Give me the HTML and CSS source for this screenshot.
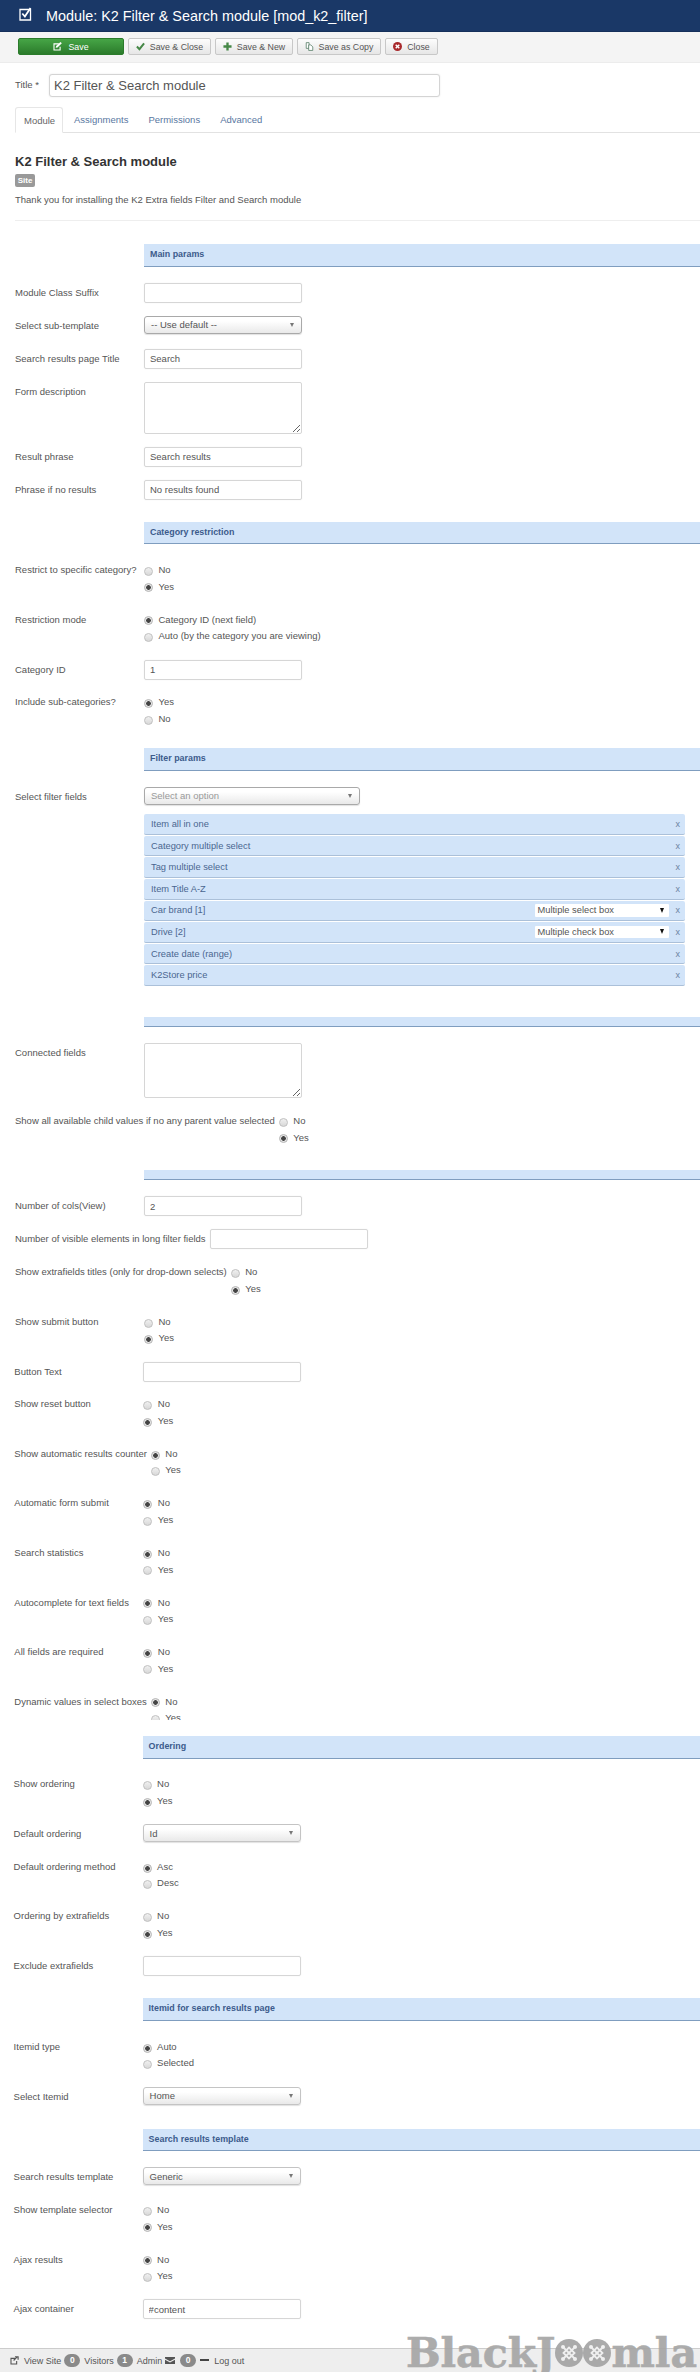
FILE: index.html
```html
<!DOCTYPE html>
<html lang="en">
<head>
<meta charset="utf-8">
<title>Module: K2 Filter &amp; Search module</title>
<link rel="stylesheet" href="styles.css">
</head>
<body>
<header class="topbar">
  <svg class="top-icon" viewBox="0 0 14 14"><path d="M1 2.500h10.500v10.500h-10.500z" fill="none" stroke="#fff" stroke-width="1.300"/><path d="M3.300 6.500l2.600 3 5.600-8.500" fill="none" stroke="#fff" stroke-width="1.800"/></svg>
  <h1 class="top-title">Module: K2 Filter &amp; Search module [mod_k2_filter]</h1>
</header>
<nav class="toolbar">
  <button class="btn btn-save"><svg class="ic" viewBox="0 0 10 10"><path d="M0.500 1.500h6v1.200h-4.800v5.600h5.600v-3h1.200v4.200h-8z" fill="#fff"/><path d="M3.500 4.500l4.800-4.500 1.500 1.500-4.800 4.600-2 .4z" fill="#fff"/></svg>Save</button>
  <button class="btn btn-sc"><svg class="ic ic-wide" viewBox="0 0 10 9"><path d="M1 4.500l2.800 3 5.200-6.500" fill="none" stroke="#468847" stroke-width="2.200"/></svg>Save &amp; Close</button>
  <button class="btn btn-sn"><svg class="ic ic-wide" viewBox="0 0 10 10"><path d="M5 0.500v9M0.500 5h9" stroke="#468847" stroke-width="2.600"/></svg>Save &amp; New</button>
  <button class="btn btn-cp"><svg class="ic ic-wide" viewBox="0 0 10 11"><path d="M1 .8h3.500v7h-3.500z" fill="#fff" stroke="#5a7f6a"/><path d="M4 3.500h2.500l2.500 2.500v4.300h-5z" fill="#fff" stroke="#5a7f6a"/></svg>Save as Copy</button>
  <button class="btn btn-cl"><svg class="ic ic-wide" viewBox="0 0 10 10"><circle cx="5" cy="5" r="5" fill="#a8282b"/><path d="M3 3l4 4M7 3l-4 4" stroke="#fff" stroke-width="1.600"/></svg>Close</button>
</nav>
<main>
  <div class="title-row">
    <label class="title-lbl">Title *</label>
    <input class="title-inp" type="text" value="K2 Filter &amp; Search module">
  </div>
  <ul class="tabs">
    <li class="tab tab-on">Module</li>
    <li class="tab">Assignments</li>
    <li class="tab">Permissions</li>
    <li class="tab">Advanced</li>
  </ul>
  <section class="intro">
    <h2 class="intro-h">K2 Filter &amp; Search module</h2>
    <span class="site-badge">Site</span>
    <p class="intro-p">Thank you for installing the K2 Extra fields Filter and Search module</p>
    <hr class="rule">
  </section>
  <form class="form">
    <div class="band band-first">Main params</div>
    <div class="row field"><label class="lbl">Module Class Suffix</label><input class="inp" type="text"></div>
    <div class="row field"><label class="lbl">Select sub-template</label><div class="chz chz-dark"><span>-- Use default --</span><i class="caret"></i></div></div>
    <div class="row field"><label class="lbl">Search results page Title</label><input class="inp" type="text" value="Search"></div>
    <div class="row field"><label class="lbl">Form description</label><textarea class="area"></textarea></div>
    <div class="row field"><label class="lbl">Result phrase</label><input class="inp" type="text" value="Search results"></div>
    <div class="row field"><label class="lbl">Phrase if no results</label><input class="inp" type="text" value="No results found"></div>

    <div class="band">Category restriction</div>
    <div class="row radio-row"><label class="lbl">Restrict to specific category?</label><div class="radios"><div class="opt"><input class="rad" type="radio" name="r1">No</div><div class="opt"><input class="rad" type="radio" name="r1" checked>Yes</div></div></div>
    <div class="row radio-row"><label class="lbl">Restriction mode</label><div class="radios"><div class="opt"><input class="rad" type="radio" name="r2" checked>Category ID (next field)</div><div class="opt"><input class="rad" type="radio" name="r2">Auto (by the category you are viewing)</div></div></div>
    <div class="row field"><label class="lbl">Category ID</label><input class="inp" type="text" value="1"></div>
    <div class="row radio-row"><label class="lbl">Include sub-categories?</label><div class="radios"><div class="opt"><input class="rad" type="radio" name="r3" checked>Yes</div><div class="opt"><input class="rad" type="radio" name="r3">No</div></div></div>

    <div class="band">Filter params</div>
    <div class="row filter-row"><label class="lbl">Select filter fields</label>
      <div class="filter-col">
        <div class="chz chz-wide chz-dark"><span class="ph">Select an option</span><i class="caret"></i></div>
        <ul class="items">
          <li class="item"><span class="item-name">Item all in one</span><span class="item-x">x</span></li>
          <li class="item"><span class="item-name">Category multiple select</span><span class="item-x">x</span></li>
          <li class="item"><span class="item-name">Tag multiple select</span><span class="item-x">x</span></li>
          <li class="item"><span class="item-name">Item Title A-Z</span><span class="item-x">x</span></li>
          <li class="item"><span class="item-name">Car brand [1]</span><div class="mini"><span>Multiple select box</span><b class="mini-caret"></b></div><span class="item-x">x</span></li>
          <li class="item"><span class="item-name">Drive [2]</span><div class="mini"><span>Multiple check box</span><b class="mini-caret"></b></div><span class="item-x">x</span></li>
          <li class="item"><span class="item-name">Create date (range)</span><span class="item-x">x</span></li>
          <li class="item"><span class="item-name">K2Store price</span><span class="item-x">x</span></li>
        </ul>
      </div>
    </div>

    <div class="band empty gap-wide"></div>
    <div class="row field"><label class="lbl">Connected fields</label><textarea class="area area-lg"></textarea></div>
    <div class="row radio-row"><label class="lbl">Show all available child values if no any parent value selected</label><div class="radios"><div class="opt"><input class="rad" type="radio" name="r4">No</div><div class="opt"><input class="rad" type="radio" name="r4" checked>Yes</div></div></div>

    <div class="band empty gap-mid"></div>
    <div class="row field"><label class="lbl">Number of cols(View)</label><input class="inp" type="text" value="2"></div>
    <div class="row field"><label class="lbl">Number of visible elements in long filter fields</label><input class="inp" type="text"></div>
    <div class="row radio-row"><label class="lbl">Show extrafields titles (only for drop-down selects)</label><div class="radios"><div class="opt"><input class="rad" type="radio" name="r5">No</div><div class="opt"><input class="rad" type="radio" name="r5" checked>Yes</div></div></div>
    <div class="row radio-row"><label class="lbl">Show submit button</label><div class="radios"><div class="opt"><input class="rad" type="radio" name="r6">No</div><div class="opt"><input class="rad" type="radio" name="r6" checked>Yes</div></div></div>

    <div class="part part-b">
      <div class="row field"><label class="lbl">Button Text</label><input class="inp" type="text"></div>
      <div class="row radio-row"><label class="lbl">Show reset button</label><div class="radios"><div class="opt"><input class="rad" type="radio" name="r7">No</div><div class="opt"><input class="rad" type="radio" name="r7" checked>Yes</div></div></div>
      <div class="row radio-row"><label class="lbl">Show automatic results counter</label><div class="radios"><div class="opt"><input class="rad" type="radio" name="r8" checked>No</div><div class="opt"><input class="rad" type="radio" name="r8">Yes</div></div></div>
      <div class="row radio-row"><label class="lbl">Automatic form submit</label><div class="radios"><div class="opt"><input class="rad" type="radio" name="r9" checked>No</div><div class="opt"><input class="rad" type="radio" name="r9">Yes</div></div></div>
      <div class="row radio-row"><label class="lbl">Search statistics</label><div class="radios"><div class="opt"><input class="rad" type="radio" name="r10" checked>No</div><div class="opt"><input class="rad" type="radio" name="r10">Yes</div></div></div>
      <div class="row radio-row"><label class="lbl">Autocomplete for text fields</label><div class="radios"><div class="opt"><input class="rad" type="radio" name="r11" checked>No</div><div class="opt"><input class="rad" type="radio" name="r11">Yes</div></div></div>
      <div class="row radio-row"><label class="lbl">All fields are required</label><div class="radios"><div class="opt"><input class="rad" type="radio" name="r12" checked>No</div><div class="opt"><input class="rad" type="radio" name="r12">Yes</div></div></div>
      <div class="row radio-row clipped"><label class="lbl">Dynamic values in select boxes</label><div class="radios"><div class="opt"><input class="rad" type="radio" name="r13" checked>No</div><div class="opt"><input class="rad" type="radio" name="r13">Yes</div></div></div>
    </div>

    <div class="part part-c">
      <div class="band">Ordering</div>
      <div class="row radio-row"><label class="lbl">Show ordering</label><div class="radios"><div class="opt"><input class="rad" type="radio" name="r14">No</div><div class="opt"><input class="rad" type="radio" name="r14" checked>Yes</div></div></div>
      <div class="row field"><label class="lbl">Default ordering</label><div class="chz"><span>Id</span><i class="caret"></i></div></div>
      <div class="row radio-row"><label class="lbl">Default ordering method</label><div class="radios"><div class="opt"><input class="rad" type="radio" name="r15" checked>Asc</div><div class="opt"><input class="rad" type="radio" name="r15">Desc</div></div></div>
      <div class="row radio-row"><label class="lbl">Ordering by extrafields</label><div class="radios"><div class="opt"><input class="rad" type="radio" name="r16">No</div><div class="opt"><input class="rad" type="radio" name="r16" checked>Yes</div></div></div>
      <div class="row field"><label class="lbl">Exclude extrafields</label><input class="inp" type="text"></div>

      <div class="band">Itemid for search results page</div>
      <div class="row radio-row"><label class="lbl">Itemid type</label><div class="radios"><div class="opt"><input class="rad" type="radio" name="r17" checked>Auto</div><div class="opt"><input class="rad" type="radio" name="r17">Selected</div></div></div>
      <div class="row field"><label class="lbl">Select Itemid</label><div class="chz"><span>Home</span><i class="caret"></i></div></div>

      <div class="band">Search results template</div>
      <div class="row field"><label class="lbl">Search results template</label><div class="chz"><span>Generic</span><i class="caret"></i></div></div>
      <div class="row radio-row"><label class="lbl">Show template selector</label><div class="radios"><div class="opt"><input class="rad" type="radio" name="r18">No</div><div class="opt"><input class="rad" type="radio" name="r18" checked>Yes</div></div></div>
      <div class="row radio-row"><label class="lbl">Ajax results</label><div class="radios"><div class="opt"><input class="rad" type="radio" name="r19" checked>No</div><div class="opt"><input class="rad" type="radio" name="r19">Yes</div></div></div>
      <div class="row field last"><label class="lbl">Ajax container</label><input class="inp" type="text" value="#content"></div>
    </div>
  </form>
</main>
<footer class="foot">
  <svg class="f-ic" viewBox="0 0 10 10"><path d="M0.500 2h5.500v1.200h-4.300v5.100h5.100v-2.800h1.200v4h-7.500z" fill="#555"/><path d="M4 5l4-4M5.500 .8h3.500v3.500" fill="none" stroke="#555" stroke-width="1.300"/></svg>
  <span class="f-t f-view">View Site</span>
  <span class="f-badge">0</span><span class="f-t">Visitors</span>
  <span class="f-badge">1</span><span class="f-t">Admin</span>
  <svg class="f-mail" viewBox="0 0 10 7"><path d="M0 0h10v1.500l-5 2.800-5-2.800zM0 2.800l5 2.700 5-2.700v4.200h-10z" fill="#555"/></svg>
  <span class="f-badge">0</span>
  <svg class="f-dash" viewBox="0 0 9 3"><path d="M0 0h9v2h-9z" fill="#444"/></svg>
  <span class="f-t">Log out</span>
  <div class="brand">
    <span class="brand-t">BlackJ</span>
    <svg class="brand-o" viewBox="0 0 28 28"><circle cx="14" cy="14" r="14" fill="#a4a4a4"/><path d="M8.500 8.500l11 11M19.500 8.500l-11 11M8.500 14l5.500-5.500 5.500 5.500-5.500 5.500z" fill="none" stroke="#f0f0f0" stroke-width="1.800"/><g fill="#f0f0f0"><circle cx="8" cy="8" r="2"/><circle cx="20" cy="8" r="2"/><circle cx="8" cy="20" r="2"/><circle cx="20" cy="20" r="2"/></g></svg>
    <svg class="brand-o" viewBox="0 0 28 28"><circle cx="14" cy="14" r="14" fill="#a4a4a4"/><path d="M8.500 8.500l11 11M19.500 8.500l-11 11M8.500 14l5.500-5.500 5.500 5.500-5.500 5.500z" fill="none" stroke="#f0f0f0" stroke-width="1.800"/><g fill="#f0f0f0"><circle cx="8" cy="8" r="2"/><circle cx="20" cy="8" r="2"/><circle cx="8" cy="20" r="2"/><circle cx="20" cy="20" r="2"/></g></svg>
    <span class="brand-t">mla</span>
  </div>
</footer>
</body>
</html>
```
FILE: styles.css
```css
* { box-sizing: border-box; }
html, body { margin: 0; padding: 0; }
body {
  width: 700px;
  height: 2372px;
  overflow: hidden;
  background: #fff;
  color: #555;
  font-family: "Liberation Sans", Arial, sans-serif;
  font-size: 9.500px;
  display: flex;
  flex-direction: column;
}
main { flex: 1; min-height: 0; }

/* top bar */
.topbar {
  height: 32px;
  background: #1a3867;
  border-bottom: 1px solid #15305a;
  display: flex;
  align-items: center;
  padding-left: 19px;
  gap: 13px;
}
.top-icon { width: 14px; height: 14px; flex: none; margin-top: -3px; }
.top-title { margin: 0; font-size: 14.400px; font-weight: normal; color: #fff; white-space: nowrap; }

/* toolbar */
.toolbar {
  height: 31px;
  background: #f4f4f4;
  border-bottom: 1px solid #ececec;
  display: flex;
  align-items: flex-start;
  padding: 6px 0 0 18px;
  gap: 4px;
}
.btn {
  height: 17px;
  padding: 0;
  border: 1px solid #c8c8c8;
  border-radius: 2px;
  background: linear-gradient(#fdfdfd, #e6e6e6);
  color: #555;
  font: 8.800px "Liberation Sans", Arial, sans-serif;
  display: flex;
  align-items: center;
  justify-content: center;
  white-space: nowrap;
}
.btn-save {
  width: 106px;
  background: linear-gradient(#46a546, #2b7b2b);
  border-color: #2b7b2b;
  color: #fff;
}
.btn-sc { width: 83px; }
.btn-sn { width: 78px; }
.btn-cp { width: 84px; }
.btn-cl { width: 53px; }
.ic { width: 9px; height: 9px; margin-right: 6px; flex: none; }
.ic-wide { margin-right: 5px; }

/* title */
.title-row { display: flex; padding: 11px 0 0 15px; }
.title-lbl { width: 34px; line-height: 21px; font-size: 9.500px; }
.title-inp {
  width: 391px;
  height: 23px;
  padding: 0 4px;
  border: 1px solid #d4d4d4;
  border-radius: 3px;
  box-shadow: 0 0 2px rgba(0,0,0,.1);
  color: #555;
  font: 13px "Liberation Sans", Arial, sans-serif;
}

/* tabs */
.tabs {
  list-style: none;
  margin: 10px 0 0 15px;
  padding: 0;
  height: 26px;
  display: flex;
  border-bottom: 1px solid #e2e2e2;
}
.tab {
  height: 26px;
  padding: 0 10px;
  color: #59779f;
  font-size: 9.500px;
  line-height: 25px;
}
.tab-on {
  width: 48px;
  padding: 0 0 0 8px;
  color: #666;
  background: #fff;
  border: 1px solid #e6e6e6;
  border-bottom-color: #fff;
  border-radius: 3px 3px 0 0;
  margin-right: 1px;
}

/* intro */
.intro { padding-left: 15px; }
.intro-h { margin: 21px 0 4px; font-size: 13px; line-height: 16px; color: #333; }
.site-badge {
  display: block;
  width: 20px;
  height: 13px;
  border-radius: 2px;
  background: #999;
  color: #fff;
  font-size: 8px;
  font-weight: bold;
  line-height: 13px;
  text-align: center;
}
.intro-p { margin: 6px 0 0; font-size: 9.500px; line-height: 14px; color: #555; }
.rule { margin: 13px 0 0; border: 0; border-top: 1px solid #eee; }

/* form */
.form, .part { display: flex; flex-direction: column; }
.form { padding-left: 15px; }
.part-b { margin-left: -.7px; }
.part-c { margin-left: -1.400px; }
.band {
  margin: 6px 0 16px 129px;
  height: 22.700px;
  padding-left: 6px;
  background: #d2e4f9;
  border-bottom: 1.500px solid #7f9dbf;
  color: #3c5b8c;
  font-size: 8.900px;
  font-weight: bold;
  line-height: 21px;
}
.row.field + .band { margin-top: 9px; }
.band.band-first { margin-top: 23px; }
.band.empty { height: 10.500px; }
.band.gap-wide { margin-top: 31px; }
.band.gap-mid { margin-top: 9px; }

.row { display: flex; align-items: flex-start; margin-bottom: 13px; }
.row.last { margin-bottom: 0; }
.lbl {
  flex: none;
  min-width: 129px;
  padding-right: 4px;
  line-height: 19.500px;
  color: #555;
  white-space: nowrap;
}
.radio-row .lbl { line-height: 16.600px; padding-top: 1.700px; }
.inp {
  width: 158px;
  height: 20px;
  padding: 0 5px;
  border: 1px solid #d6d6d6;
  border-radius: 2px;
  box-shadow: 0 0 2px rgba(0,0,0,.06);
  background: #fff;
  color: #555;
  font: 9.500px "Liberation Sans", Arial, sans-serif;
}
.area {
  display: block;
  width: 158px;
  height: 52px;
  border: 1px solid #d6d6d6;
  border-radius: 2px;
  background: #fff;
  margin: 0;
}
.area-lg { height: 55px; }
.chz {
  width: 158px;
  height: 18px;
  padding: 0 6px;
  border: 1px solid #c4c4c4;
  border-radius: 3px;
  background: linear-gradient(#fff 25%, #e9e9e9);
  box-shadow: 0 1px 1px rgba(0,0,0,.12);
  display: flex;
  align-items: center;
  justify-content: space-between;
  font-size: 9.500px;
  color: #555;
}
.row.field .chz { margin-bottom: 2px; }
.chz-dark { border-color: #a9a9a9; }
.chz-wide { width: 215.500px; }
.ph { color: #999; }
.caret {
  width: 0;
  height: 0;
  margin-right: 1px;
  border-left: 2.500px solid transparent;
  border-right: 2.500px solid transparent;
  border-top: 4px solid #777;
}
.radios { display: flex; flex-direction: column; padding: 1.700px 0; }
.opt { height: 16.600px; display: flex; align-items: center; gap: 5.500px; white-space: nowrap; line-height: 16.600px; }
.rad {
  appearance: none;
  -webkit-appearance: none;
  flex: none;
  width: 9px;
  height: 9px;
  margin: 2px 0 0;
  border: 1px solid #c0c0c0;
  border-radius: 50%;
  background: linear-gradient(#f0f0f0, #d8d8d8);
}
.rad:checked {
  border-color: #b4b4b4;
  background: radial-gradient(circle, #444 0 2px, #e6e6e6 2.600px);
}
.clipped { height: 28px; overflow: hidden; margin-bottom: 10px; }

/* selected filter items */
.filter-row { margin-bottom: 0; }
.filter-col { width: 541px; }
.items { list-style: none; margin: 9.400px 0 0; padding: 0; display: flex; flex-direction: column; gap: 1px; }
.item {
  height: 20.600px;
  padding: 0 5px 0 7px;
  background: #d2e4f9;
  border-bottom: 1.500px solid #abc0d9;
  border-radius: 2px;
  color: #4a6690;
  display: flex;
  align-items: center;
  font-size: 9.300px;
}
.item-name { flex: 1; }
.item-x { width: 11px; text-align: right; font-size: 9px; color: #6d83a3; }
.mini {
  width: 134.500px;
  height: 12.500px;
  padding: 0 3px;
  background: #fff;
  border-radius: 1px;
  display: flex;
  align-items: center;
  justify-content: space-between;
  color: #555;
}
.mini-caret {
  width: 0;
  height: 0;
  margin-right: 2px;
  border-left: 2.500px solid transparent;
  border-right: 2.500px solid transparent;
  border-top: 5px solid #111;
}

/* footer */
.foot {
  position: relative;
  flex: none;
  height: 24px;
  background: #eee;
  border-top: 1px solid #ccc;
  display: flex;
  align-items: center;
  padding-left: 10px;
  color: #555;
  font-size: 9px;
}
.f-ic { width: 9px; height: 9px; margin-right: 5px; flex: none; }
.f-view { margin-right: 7px; }
.f-badge {
  width: 16px;
  height: 12.500px;
  margin: 0 4px 0 0;
  border-radius: 8px;
  background: #8a8a8a;
  color: #fff;
  font-size: 8.500px;
  font-weight: bold;
  line-height: 12.500px;
  text-align: center;
  flex: none;
}
.f-t { margin-right: 3px; white-space: nowrap; }
.f-mail { width: 10px; height: 7px; margin: 0 5px 0 0; flex: none; }
.f-dash { width: 9px; height: 3px; margin: 0 5px 0 0; flex: none; }

/* watermark over the footer */
.brand {
  position: absolute;
  right: 3px;
  bottom: 3px;
  display: flex;
  align-items: center;
  opacity: .92;
}
.brand-t {
  font-family: "DejaVu Serif", serif;
  font-weight: bold;
  font-size: 41px;
  line-height: 32px;
  color: #a6a6a6;
  -webkit-text-stroke: .6px #a6a6a6;
  white-space: nowrap;
}
.brand-o { width: 28px; height: 28px; flex: none; }
```
